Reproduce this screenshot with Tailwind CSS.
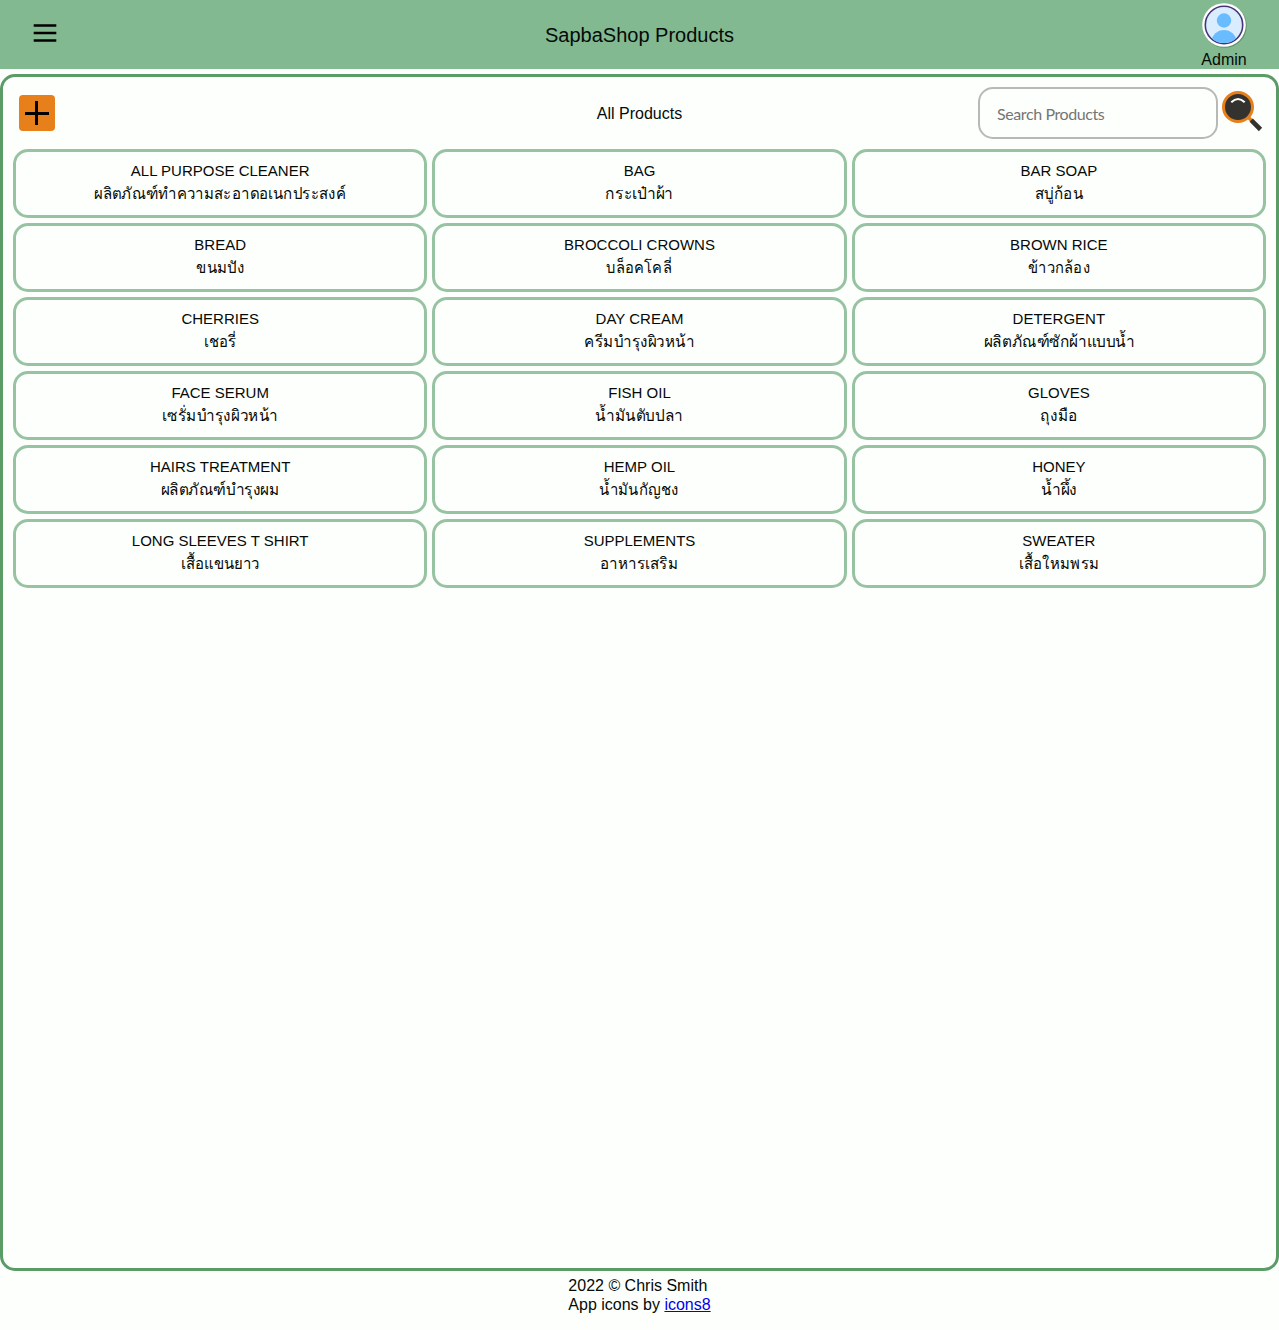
<!DOCTYPE html>
<html lang="en">
<head>
<meta charset="utf-8">
<title>SapbaShop Products</title>
<script src="https://cdn.jsdelivr.net/npm/@tailwindcss/browser@4"></script>
</head>
<body class="min-h-screen bg-[#fdfffc] font-['Liberation_Sans',sans-serif] text-base leading-[18px] text-[#050a07]">
<header class="grid h-[69px] grid-cols-3 bg-[#82b991]">
  <button class="ml-[30px] mt-[18px] size-[30px]" aria-label="Menu">
    <svg class="size-[30px]" viewBox="0 0 30 30" fill="none" stroke="#000" stroke-width="2.4"><path d="M3.7 7.5h22.6M3.7 15h22.6M3.7 22.5h22.6"/></svg>
  </button>
  <h1 class="self-center pt-[1px] text-center text-xl leading-6">SapbaShop Products</h1>
  <div class="mr-8 flex w-[46px] flex-col items-center justify-self-end pt-[2px]">
    <svg class="size-[46px] shrink-0" viewBox="0 0 46 46">
      <circle cx="23.700" cy="23.800" r="22" fill="#477553" opacity=".6"/>
      <circle cx="23" cy="23" r="21.800" fill="#fff"/>
      <circle cx="23" cy="23" r="18.700" fill="#daedff" stroke="#453578" stroke-width="1.600"/>
      <circle cx="23" cy="18.500" r="7.200" fill="#69bcff"/>
      <path d="M11 36.200C13.500 31 17.500 28 23 28s9.500 3 12 8.200C32 39.500 28 41 23 41s-9-1.500-12-4.800Z" fill="#69bcff"/>
    </svg>
    <span class="mt-[3px]">Admin</span>
  </div>
</header>

<main class="mt-[5px] h-[1197px] rounded-[15px] border-3 border-[#5b9b66] p-[10px]">
  <div class="grid h-[52px] grid-cols-3 items-center">
    <button class="ml-[6px] size-9 rounded-[4px] bg-[#e77f1b]" aria-label="Add product">
      <svg class="size-9" viewBox="0 0 36 36" stroke="#000" stroke-width="3"><path d="M6 18.500h24M17.500 6v24"/></svg>
    </button>
    <h2 class="pt-[2px] text-center">All Products</h2>
    <div class="flex justify-self-end">
      <input class="h-[52px] w-60 rounded-[15px] border-2 border-[#b8b9b7] bg-transparent px-[17px] font-['Lato',sans-serif] text-base tracking-[-0.4px] placeholder:text-[#757575]" placeholder="Search Products">
      <svg class="size-12" viewBox="0 0 48 48">
        <path d="M28 28l7 7" stroke="#e77f1b" stroke-width="3.400"/>
        <path d="M33.200 33.200l9.300 9.300" stroke="#33322e" stroke-width="4.600"/>
        <circle cx="20" cy="20" r="14.500" fill="#33322e" stroke="#e77f1b" stroke-width="3"/>
        <path d="M13.300 15.300q6.700-6.700 13.400 0" fill="none" stroke="#fff" stroke-width="2"/>
      </svg>
    </div>
  </div>
  <ul id="products" class="mt-[10px] grid grid-cols-3 gap-[5px]"></ul>
</main>

<footer class="flex justify-center pt-[5px]">
  <div class="leading-[19px]">
    <p>2022 © Chris Smith</p>
    <p>App icons by <a class="text-[#0000ee] underline" href="#">icons8</a></p>
  </div>
</footer>

<script>
// English name, Thai name, horizontal scale of the Thai name
const products = [
  ['ALL PURPOSE CLEANER', 'ผลิตภัณฑ์ทำความสะอาดอเนกประสงค์', 0.937],
  ['BAG', 'กระเป๋าผ้า', 0.97],
  ['BAR SOAP', 'สบู่ก้อน', 0.95],
  ['BREAD', 'ขนมปัง', 0.94],
  ['BROCCOLI CROWNS', 'บล็อคโคลี่', 0.92],
  ['BROWN RICE', 'ข้าวกล้อง', 0.92],
  ['CHERRIES', 'เชอรี่', 0.93],
  ['DAY CREAM', 'ครีมบำรุงผิวหน้า', 0.948],
  ['DETERGENT', 'ผลิตภัณฑ์ซักผ้าแบบน้ำ', 0.962],
  ['FACE SERUM', 'เซรั่มบำรุงผิวหน้า', 0.955],
  ['FISH OIL', 'น้ำมันตับปลา', 0.96],
  ['GLOVES', 'ถุงมือ', 0.96],
  ['HAIRS TREATMENT', 'ผลิตภัณฑ์บำรุงผม', 0.96],
  ['HEMP OIL', 'น้ำมันกัญชง', 0.935],
  ['HONEY', 'น้ำผึ้ง', 0.97],
  ['LONG SLEEVES T SHIRT', 'เสื้อแขนยาว', 0.935],
  ['SUPPLEMENTS', 'อาหารเสริม', 0.945],
  ['SWEATER', 'เสื้อใหมพรม', 0.93],
];
document.getElementById('products').innerHTML = products.map(([en, th, sx]) => `
  <li class="h-[69px] rounded-[15px] border-3 border-[#98c3a3] pt-[10px] text-center">
    <p class="h-[18px] text-[15px] leading-[18px]">${en}</p>
    <p class="mt-[4px] h-[20px] text-base leading-[20px] font-medium" lang="th" style="transform:scaleX(${sx})">${th}</p>
  </li>`).join('');
</script>
</body>
</html>
